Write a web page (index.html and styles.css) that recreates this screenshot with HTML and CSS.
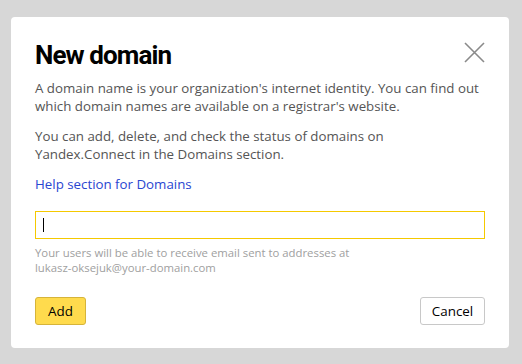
FILE: index.html
```html
<!DOCTYPE html>
<html lang="en">
<head>
    <meta charset="UTF-8">
    <meta name="viewport" content="width=device-width, initial-scale=1.0">
    <title>New domain</title>
    <link rel="stylesheet" href="styles.css">
</head>
<body>
    <div class="modal">
        <div class="modal-header">
            <h1>New domain</h1>
            <button class="close-button" aria-label="Close">
                <svg width="21" height="21" viewBox="0 0 21 21">
                    <path d="M1 1 L20 20 M20 1 L1 20" stroke="#8a8a8a" stroke-width="1.6" fill="none"/>
                </svg>
            </button>
        </div>

        <p>
            A domain name is your organization's internet identity. You can find out
            which domain names are available on a registrar's website.
        </p>

        <p>
            You can add, delete, and check the status of domains on
            Yandex.Connect in the Domains section.
        </p>

        <a class="help-link" href="#">Help section for Domains</a>

        <div class="field">
            <span class="cursor"></span>
        </div>

        <div class="hint">
            Your users will be able to receive email sent to addresses at<br>
            lukasz-oksejuk@your-domain.com
        </div>

        <div class="actions">
            <button class="btn btn-add">Add</button>
            <button class="btn btn-cancel">Cancel</button>
        </div>
    </div>
</body>
</html>
```

FILE: styles.css
```css
* {
    margin: 0;
    padding: 0;
    box-sizing: border-box;
}

body {
    font-family: "Open Sans", "Liberation Sans", sans-serif;
    background: #d7d7d7;
    padding: 17px 13px 16px 11px;
    color: #555;
}

.modal {
    width: 498px;
    height: 331px;
    background: #fff;
    border-radius: 4px;
    padding: 23px 24px 0 24px;
}

.modal-header {
    display: flex;
    justify-content: space-between;
    align-items: flex-start;
    margin-bottom: 9px;
}

h1 {
    font-family: Roboto, "Liberation Sans", sans-serif;
    font-size: 26px;
    font-weight: 700;
    color: #000;
    letter-spacing: -0.9px;
    line-height: 30px;
}

.close-button {
    background: none;
    border: none;
    margin-top: 2px;
    cursor: pointer;
    display: flex;
}

p {
    font-size: 13.3px;
    line-height: 18px;
    margin-bottom: 12px;
}

.help-link {
    display: block;
    font-size: 13.3px;
    line-height: 18px;
    color: #2946d1;
    text-decoration: none;
    margin-bottom: 18px;
}

.field {
    height: 28px;
    border: 1px solid #f5c900;
    display: flex;
    align-items: center;
    padding-left: 7px;
}

.cursor {
    width: 1px;
    height: 14px;
    background: #000;
}

.hint {
    font-size: 11.35px;
    line-height: 15px;
    color: #a0a0a0;
    margin-top: 6px;
}

.actions {
    display: flex;
    justify-content: space-between;
    margin-top: 22px;
}

.btn {
    font-family: "Open Sans", "Liberation Sans", sans-serif;
    font-size: 13.4px;
    height: 28px;
    border-radius: 3px;
    color: #000;
    cursor: pointer;
}

.btn-add {
    width: 51px;
    background: #ffdb4d;
    border: 1px solid #d6b43a;
}

.btn-cancel {
    width: 65px;
    background: #fff;
    border: 1px solid #c8c8c8;
}
```
